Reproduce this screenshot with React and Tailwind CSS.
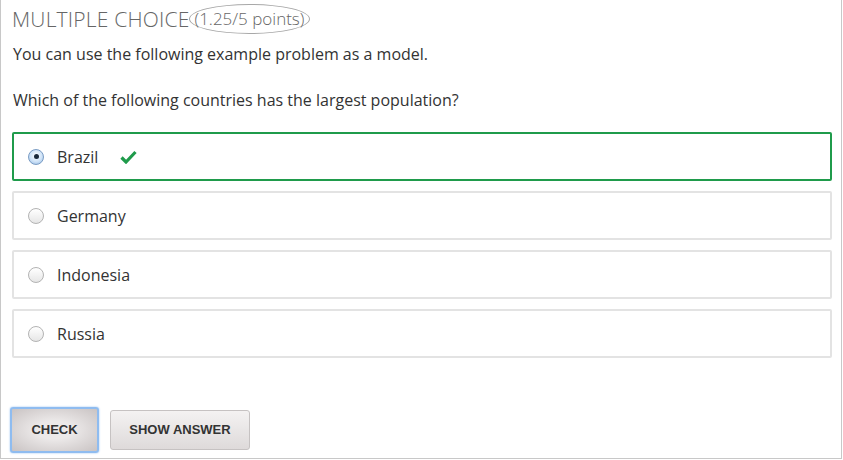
import React from "react";

const options = ["Brazil", "Germany", "Indonesia", "Russia"];

function Radio({ checked }) {
  return checked ? (
    <span className="flex h-[16px] w-[16px] items-center justify-center rounded-full border border-[#7a9cc4] bg-[radial-gradient(circle_at_50%_40%,#ffffff_0%,#cfe3f7_55%,#8fb6e2_100%)]">
      <span className="h-[5px] w-[5px] rounded-full bg-[#1b2a3a]" />
    </span>
  ) : (
    <span className="h-[16px] w-[16px] rounded-full border border-[#b3b3b3] bg-[linear-gradient(#ffffff,#e6e6e6)]" />
  );
}

export default function App() {
  return (
    <div className="h-[460px] w-[843px] bg-white" style={{ fontFamily: '"Open Sans", sans-serif' }}>
      <div className="flex h-[459px] w-[842px] flex-col border-x border-b border-[#c8c8c8] px-[10px]">
        <div className="flex items-center pt-[4px]">
          <span className="ml-[1px] text-[21px] font-light leading-[30px] tracking-[0.2px] text-[#666]">MULTIPLE CHOICE</span>
          <span className="-ml-[1px] flex h-[30px] items-center rounded-[50%] border-[1.5px] border-[#a8a8a8] px-[5px] text-[17px] font-light leading-[24px] text-[#666]">
            (1.25/5 points)
          </span>
        </div>
        <p className="ml-[2px] mt-[8px] text-[16px] leading-[24px] text-[#333]">You can use the following example problem as a model.</p>
        <p className="ml-[2px] mt-[22px] text-[16px] leading-[24px] text-[#333]">Which of the following countries has the largest population?</p>
        <div className="mt-[20px] flex flex-col gap-[10px] pl-[1px] pr-[0px]">
          {options.map((o, i) => (
            <div
              key={o}
              className={
                "flex h-[49px] w-[820px] items-center rounded-[2px] border-2 pl-[14px] " +
                (i === 0 ? "border-[#1f9b4b]" : "border-[#e3e3e3]")
              }
            >
              <Radio checked={i === 0} />
              <span className="ml-[13px] text-[16px] text-[#333]">{o}</span>
              {i === 0 && (
                <svg className="ml-[22px]" width="17" height="14" viewBox="0 0 17 14">
                  <path d="M1.5 7.5 L6 12 L15.5 2" fill="none" stroke="#1f9b4b" strokeWidth="3.2" strokeLinecap="butt" />
                </svg>
              )}
            </div>
          ))}
        </div>
        <div className="mt-auto mb-[5px] flex items-center gap-[11px] pl-[0px]" style={{ fontFamily: '"Liberation Sans", Arial, sans-serif' }}>
          <button className="flex h-[46px] w-[89px] -ml-[1px] items-center justify-center rounded-[3px] border-2 border-[#8fbcf0] bg-[radial-gradient(ellipse_at_center,#ece9e9_30%,#c9c3c3_100%)] text-[13px] font-bold text-[#333] shadow-[0_0_2px_#8fbcf0]">
            CHECK
          </button>
          <button className="flex h-[40px] w-[140px] items-center justify-center rounded-[3px] border border-[#c6c2c2] bg-[linear-gradient(#f4f2f2,#dedada)] text-[13px] font-bold text-[#333]">
            SHOW ANSWER
          </button>
        </div>
      </div>
    </div>
  );
}
